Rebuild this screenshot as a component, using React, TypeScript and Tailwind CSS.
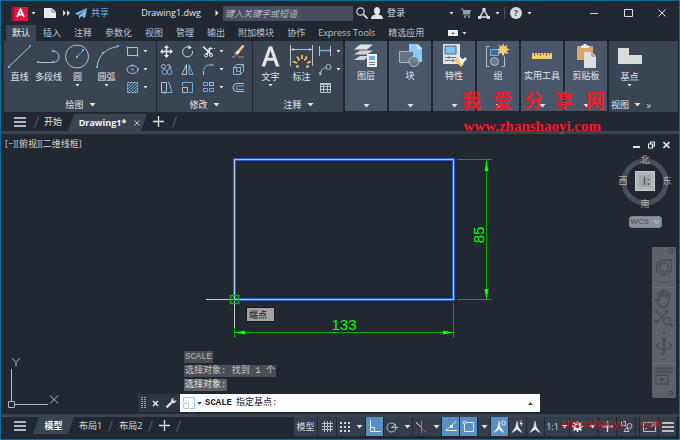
import React from "react";

type Kids = { children: React.ReactNode };

const LINE = "#b9c0c9";
const BLUE = "#63b3ea";

function Icon({ w, h, children }: Kids & { w: number; h: number }) {
  return (
    <svg width={w} height={h} viewBox={`0 0 ${w} ${h}`} fill="none" stroke={LINE} className="shrink-0" aria-hidden="true">
      {children}
    </svg>
  );
}

function Caret({ small = false }: { small?: boolean }) {
  return small ? (
    <Icon w={5} h={3}>
      <path d="M0.5 0h4L2.5 2.5z" fill="#e6e9ed" stroke="none" />
    </Icon>
  ) : (
    <Icon w={7} h={4}>
      <path d="M0.5 0h6L3.5 3.5z" fill="#dfe3e8" stroke="none" />
    </Icon>
  );
}

function Dots({ at, r = 1 }: { at: [number, number][]; r?: number }) {
  return (
    <>
      {at.map(([x, y]) => (
        <rect key={`${x}-${y}`} x={x - r} y={y - r} width={2 * r} height={2 * r} fill={BLUE} stroke="none" />
      ))}
    </>
  );
}

function Burger() {
  return (
    <Icon w={12} h={10}>
      <path d="M0 1h12M0 5h12M0 9h12" stroke="#e4e6ea" strokeWidth="1.4" />
    </Icon>
  );
}

function Slash() {
  return (
    <Icon w={5} h={12}>
      <path d="M0.5 11.5L4.5 0.5" stroke="#5a6475" />
    </Icon>
  );
}

function Plus() {
  return (
    <Icon w={11} h={11}>
      <path d="M5.5 0v11M0 5.5h11" stroke="#dfe2e6" strokeWidth="1.3" />
    </Icon>
  );
}

/* ---------- Title bar ---------- */

function IconButton({ label, className = "", children }: Kids & { label: string; className?: string }) {
  return (
    <button type="button" aria-label={label} className={`flex h-full shrink-0 items-center justify-center ${className}`}>
      {children}
    </button>
  );
}

function TitleBar() {
  return (
    <header className="flex h-6 items-center">
      <div className="flex h-full w-[222px] shrink-0 items-center">
        <IconButton label="应用程序菜单" className="w-9 gap-[3px] pl-[9px]">
          <Icon w={17} h={15}>
            <path d="M0 1h17v14H0z" fill="#e5123f" stroke="none" />
            <path d="M0 1h3v14H0z" fill="#a00d30" stroke="none" />
            <path d="M6 11L9.500 3.500L13 11M7.300 8.600h4.400" stroke="#fff" strokeWidth="1.800" />
          </Icon>
          <Caret small />
        </IconButton>
        <IconButton label="新建" className="w-[25px]">
          <Icon w={12} h={10}>
            <path d="M0 0h8l4 4v6H0z" fill="#e8e8e8" stroke="none" />
            <path d="M8 0v4h4" stroke="#7b828c" />
          </Icon>
        </IconButton>
        <IconButton label="更多" className="w-[9px]">
          <Icon w={7} h={6}>
            <path d="M0 0l3 3-3 3zM4 0l3 3-3 3z" fill="#d5d8dc" stroke="none" />
          </Icon>
        </IconButton>
        <button type="button" className="flex h-full w-[56px] items-center gap-1 pl-1 text-[#6cb6ea]">
          <Icon w={12} h={11}>
            <path d="M12 0L0 5.500l3 1.500zM12 0L4 7.500V11l2-2.500zM12 0L6.500 8l3.500 2z" fill="#7cc4f4" stroke="none" />
          </Icon>
          共享
        </button>
        <span className="w-[88px] text-center text-[#e1e4e8]">Drawing1.dwg</span>
        <Icon w={4} h={6}>
          <path d="M0.5 0l3 3-3 3z" fill="#e4e6ea" stroke="none" />
        </Icon>
      </div>
      <input
        aria-label="键入关键字或短语"
        placeholder="键入关键字或短语"
        className="h-[15px] w-[130px] shrink-0 bg-[#474e60] px-0.5 italic placeholder-[#b4bac5] outline-none"
      />
      <IconButton label="搜索" className="w-[18px]">
        <Icon w={12} h={12}>
          <circle cx="4.500" cy="4.500" r="3.700" stroke="#d6d9dd" strokeWidth="1.200" />
          <path d="M7.300 7.300L11.500 11.500" stroke="#d6d9dd" strokeWidth="1.800" />
        </Icon>
      </IconButton>
      <button type="button" className="flex h-full w-[36px] shrink-0 items-center gap-1 text-[#d8dce1]">
        <Icon w={12} h={12}>
          <path d="M0 12c0-3 2-4 4.500-4.500C2 5.500 2.500 0 6 0s4 5.500 1.500 7.500C10 8 12 9 12 12z" fill="#e2e4e6" stroke="none" />
        </Icon>
        <span className="whitespace-nowrap">登录</span>
      </button>
      <div className="flex h-full items-center pl-[40px]">
        <IconButton label="账户" className="w-[9px]">
          <Caret small />
        </IconButton>
        <IconButton label="应用商店" className="w-5">
          <Icon w={10} h={10}>
            <path d="M0 1h2l1 6h6" stroke="#9aa0a9" />
            <path d="M2 2h8l-1 4H3z" fill="#9aa0a9" stroke="none" />
            <circle cx="4" cy="9" r="1" fill="#9aa0a9" stroke="none" />
            <circle cx="8" cy="9" r="1" fill="#9aa0a9" stroke="none" />
          </Icon>
        </IconButton>
        <IconButton label="保持连接" className="w-[26px] gap-[5px]">
          <Icon w={12} h={11}>
            <path d="M6 2L2 9M6 2l4 7M2 9h8" stroke="#dcdfe3" strokeWidth="1.500" />
            <path d="M4.500 0h3v3h-3zM0 8h3v3H0zM9 8h3v3H9z" fill="#dcdfe3" stroke="none" />
          </Icon>
          <Caret small />
        </IconButton>
        <span className="mr-0.5 ml-0.5 h-3 w-px bg-[#485062]" />
        <IconButton label="帮助" className="w-[28px] gap-[5px]">
          <span className="flex size-3 items-center justify-center rounded-full bg-[#d8d8d8] text-[9px] font-bold text-[#4a515c]">?</span>
          <Caret small />
        </IconButton>
      </div>
      <div className="ml-auto flex h-full">
        <IconButton label="最小化" className="w-[34px]">
          <Icon w={8} h={8}><path d="M0 4.500h8" stroke="#c9ccd0" /></Icon>
        </IconButton>
        <IconButton label="最大化" className="w-[34px]">
          <Icon w={9} h={8}><path d="M0.500 0.500h8v7h-8z" stroke="#dde0e4" /></Icon>
        </IconButton>
        <IconButton label="关闭" className="w-[34px]">
          <Icon w={8} h={8}><path d="M0.500 0.500l7 7M7.500 0.500l-7 7" stroke="#e6e8eb" /></Icon>
        </IconButton>
      </div>
    </header>
  );
}

/* ---------- Ribbon ---------- */

const TABS = ["默认", "插入", "注释", "参数化", "视图", "管理", "输出", "附加模块", "协作", "Express Tools", "精选应用"];

function RibbonTabs() {
  return (
    <nav className="flex h-4 items-stretch gap-px pl-[5px]">
      {TABS.map((t, i) => (
        <button
          key={t}
          type="button"
          className={`px-1.5 whitespace-nowrap ${i === 0 ? "bg-[#3b4453] text-[#f0f2f4]" : "text-[#bcc2ca]"}`}
        >
          {t}
        </button>
      ))}
      <IconButton label="功能区显示" className="w-[52px] gap-1">
        <Icon w={10} h={6}>
          <path d="M0 0h10v6H0z" fill="#eceef0" stroke="none" />
          <path d="M3.500 4L5 2l1.500 2z" fill="#333b48" stroke="none" />
        </Icon>
        <Caret small />
      </IconButton>
    </nav>
  );
}

function Panel({ title, className = "", children, extra }: Kids & { title: string; className?: string; extra?: React.ReactNode }) {
  return (
    <section className={`flex h-[71px] shrink-0 flex-col bg-[#3b4453] ${className}`}>
      <div className="flex h-[58px] pt-px">{children}</div>
      <button type="button" className="flex h-[12px] items-center justify-center gap-[5px]">
        {title}
        <Caret />
        {extra}
      </button>
    </section>
  );
}

function BigButton({ label, caret = false, wide = false, children }: Kids & { label: string; caret?: boolean; wide?: boolean }) {
  return (
    <button type="button" className={`flex shrink-0 flex-col items-center pt-[2px] ${wide ? "w-[33px]" : "w-[29px]"}`}>
      <Icon w={25} h={25}>{children}</Icon>
      <span className="mt-[2px] h-[12px] leading-[12px] whitespace-nowrap">{label}</span>
      {caret && <span className="mt-px"><Caret small /></span>}
    </button>
  );
}

function SmallTool({ label, caret = false, children }: Kids & { label: string; caret?: boolean }) {
  return (
    <button type="button" aria-label={label} className="flex h-[18px] items-center gap-1">
      <Icon w={13} h={13}>{children}</Icon>
      {caret && <Caret small />}
    </button>
  );
}

function DrawPanel() {
  return (
    <Panel title="绘图" className="w-[152px] pl-px">
      <BigButton label="直线">
        <path d="M1.500 23L23.500 2" />
        <Dots at={[[2, 23], [23, 2]]} />
      </BigButton>
      <BigButton label="多段线">
        <path d="M1 18.500h16c8 0 8-11.500 0-11.500" />
        <Dots at={[[2, 18], [17, 18], [17, 7]]} />
      </BigButton>
      <BigButton label="圆" caret>
        <circle cx="12" cy="12.500" r="11.500" />
        <path d="M12 12.500l6.500-6" stroke={BLUE} />
        <Dots at={[[12, 13], [18, 6]]} />
      </BigButton>
      <BigButton label="圆弧" caret>
        <path d="M3 23C4 12 12 4 24 2.500" />
        <Dots at={[[3, 23], [9, 9], [24, 2]]} />
      </BigButton>
      <div className="flex flex-col pl-[5px]">
        <SmallTool label="矩形" caret>
          <path d="M1.500 2.500h10v8h-10z" />
          <Dots at={[[1.5, 2.5], [11.5, 10.5]]} />
        </SmallTool>
        <SmallTool label="椭圆" caret>
          <ellipse cx="6.500" cy="6.500" rx="5.500" ry="4" />
          <Dots at={[[6.5, 6.5], [6.5, 2.5], [12, 6.5]]} />
        </SmallTool>
        <SmallTool label="图案填充" caret>
          <path d="M1.500 1.500h10v10h-10z" strokeDasharray="2 1" />
          <path d="M2 5l3-3M2 8l6-6M2 11l9-9M5 11l6-6M8 11l3-3" stroke={BLUE} />
        </SmallTool>
      </div>
    </Panel>
  );
}

function ModifyPanel() {
  return (
    <Panel title="修改" className="w-[95px]">
      <div className="grid h-[54px] grid-cols-[21px_21px_30px_14px] content-start pl-[3px]">
        <SmallTool label="移动">
          <path d="M6.500 1v11M1 6.500h11" stroke="#f0f1f3" strokeWidth="1.400" />
          <path d="M6.500 0L4 3h5zM6.500 13L4 10h5zM0 6.500L3 4v5zM13 6.500L10 4v5z" fill="#f0f1f3" stroke="none" />
        </SmallTool>
        <SmallTool label="旋转">
          <path d="M8.500 2.300A5 5 0 1 0 11.500 6" stroke="#d0d4d9" />
          <path d="M7 0l4 2.500-3.500 2z" fill="#d0d4d9" stroke="none" />
        </SmallTool>
        <SmallTool label="修剪" caret>
          <path d="M1 1.500l8 7.500M9 2.500L4.500 9.500" stroke="#e8eaed" strokeWidth="1.700" />
          <circle cx="4" cy="10.500" r="1.500" stroke="#e8eaed" />
          <circle cx="9" cy="10" r="1.500" stroke="#e8eaed" />
          <path d="M6 3.500h7" strokeDasharray="2 1" />
        </SmallTool>
        <SmallTool label="删除">
          <path d="M11.500 0.500L6 7" stroke="#efcf83" strokeWidth="2.500" />
          <path d="M6.500 6.500L4 9" stroke="#fff" strokeWidth="3" />
          <path d="M4.500 8.500L3 10" stroke="#e05246" strokeWidth="3" />
          <path d="M0 12h3" stroke={BLUE} />
          <path d="M6 12h6" stroke="#d08b68" />
        </SmallTool>
        <SmallTool label="复制">
          <circle cx="3.500" cy="3.500" r="2" />
          <path d="M7 2h3v3M8.500 4L10 5.500 11.500 4" />
          <circle cx="4.500" cy="9" r="2.500" stroke={BLUE} />
          <circle cx="9.500" cy="9" r="2.500" stroke={BLUE} />
        </SmallTool>
        <SmallTool label="镜像">
          <path d="M5.500 1.500v10H1z" />
          <path d="M8 1.500v10h4z" stroke={BLUE} />
        </SmallTool>
        <SmallTool label="圆角" caret>
          <path d="M1.500 12V9" />
          <path d="M1.500 9c0-4 2-7 6-7" stroke={BLUE} />
          <path d="M7.500 2H12" />
        </SmallTool>
        <SmallTool label="分解">
          <path d="M1.500 4.500h7v7h-7zM1.500 4.500l3-3h7l-3 3M11.500 1.500v7l-3 3" stroke="#8fb3d1" />
          <path d="M4.500 4.500v4h4" stroke={BLUE} />
        </SmallTool>
        <SmallTool label="拉伸">
          <path d="M5 11.500H1.500v-10h5v9" />
          <path d="M8 1.500h1l3 10H5M4 9.500l2 2-2 2" stroke={BLUE} />
        </SmallTool>
        <SmallTool label="缩放">
          <path d="M1.500 6.500h5v5h-5z" />
          <path d="M1.500 5V1.500h10v10H8" stroke={BLUE} />
        </SmallTool>
        <SmallTool label="阵列" caret>
          <path d="M1.500 1.500h4v3h-4zM1.500 7.500h4v3h-4zM7.500 7.500h4v3h-4z" stroke={BLUE} />
          <path d="M7.500 1.500h4v3h-4z" />
        </SmallTool>
        <SmallTool label="偏移">
          <path d="M12 2.500H5a4 4 0 0 0 0 8h7" />
          <path d="M12 5H6a1.700 1.700 0 0 0 0 3.500h6" stroke={BLUE} />
        </SmallTool>
      </div>
    </Panel>
  );
}

function AnnotatePanel() {
  return (
    <Panel title="注释" className="w-[90px] pl-px">
      <BigButton label="文字" caret wide>
        <path d="M3.500 22.500L10.800 2.500h3.400l7.300 20h-3.600l-2-5.800H9.100l-2 5.800zM10.100 13.800h4.800L12.500 6.500z" fill="#e4e4e4" stroke="none" />
      </BigButton>
      <BigButton label="标注">
        <path d="M1.500 1v21M23.500 1v21M2 5.500h21" />
        <path d="M2 5.500l3-1.500v3zM23 5.500l-3-1.500v3z" fill={LINE} stroke="none" />
        <path d="M4 17.500l4 1.500M8 12.500l2.500 4M13 11v4M18 12.500l-2.500 4M22 17.500l-4 1.500M7 22.500h3M17 22.500h3" stroke="#f2c45a" strokeWidth="1.800" />
      </BigButton>
      <div className="flex flex-col pl-[3px]">
        <SmallTool label="线性" caret>
          <path d="M0.500 1v10M11.500 1v10" />
          <path d="M1 5.500h10" stroke={BLUE} strokeWidth="1.500" />
        </SmallTool>
        <SmallTool label="引线" caret>
          <path d="M1 11.500C2 6 5 5 7 4.500" />
          <circle cx="9.500" cy="4" r="2.500" />
          <path d="M0 9l3 1-2 3z" fill={LINE} stroke="none" />
        </SmallTool>
        <SmallTool label="表格">
          <path d="M1.500 2.500h10v9h-10zM1.500 5.500h10M1.500 8.500h10M4.500 3v8M8.500 3v8" />
          <path d="M1 2h11v2H1z" fill={LINE} stroke="none" />
        </SmallTool>
      </div>
    </Panel>
  );
}

function CollapsedPanel({ label, children }: Kids & { label: string }) {
  return (
    <button type="button" className="flex h-[70px] w-[42px] shrink-0 flex-col items-center bg-[#4a566a] pt-[2px]">
      <Icon w={26} h={25}>{children}</Icon>
      <span className="mt-[2px] leading-[12px] whitespace-nowrap">{label}</span>
      <span className="mt-auto mb-[3px]"><Caret /></span>
    </button>
  );
}

function CollapsedPanels() {
  return (
    <div className="flex gap-[2px] px-px">
      <CollapsedPanel label="图层">
        <path d="M7 1.500h13l-6 5H1z" fill="#e2e2e2" stroke="none" />
        <path d="M7 7.500h13l-6 4H1zM7 13h9l-5 4H1z" fill="#d2d5d8" stroke="none" />
        <path d="M14 11h10v13H14z" fill="#eef0f2" stroke="none" />
        <path d="M16 13h6v4h-6z" fill={BLUE} stroke="none" />
        <path d="M16 19.500h6M16 21.500h6" stroke="#6d7784" />
      </CollapsedPanel>
      <CollapsedPanel label="块">
        <path d="M12 1h9l4 4v14H12z" fill="#8ccaf7" stroke="none" />
        <path d="M20 1v5h5" fill="#c7e5fb" stroke="none" />
        <path d="M2.500 8.500h14v11h-14z" fill="#667285" stroke="#aab2bc" />
        <circle cx="17" cy="18.500" r="5" fill="#69788c" fillOpacity="0.800" />
      </CollapsedPanel>
      <CollapsedPanel label="特性">
        <path d="M2 1h17v20H2z" fill="#e0e2e4" stroke="none" />
        <path d="M4 3h11v8H4z" fill="#79c3f5" stroke="#4e6680" />
        <path d="M4 14.500h11M4 17.500h11M8 13v3M12 16v3" stroke="#6d7784" />
        <path d="M13 17l3-3 7 7-3 3z" fill="#f3c76b" stroke="none" />
        <path d="M18 15l5 4M20 20l5-5" stroke="#fff" strokeWidth="2.500" />
      </CollapsedPanel>
      <CollapsedPanel label="组">
        <path d="M4.500 3.500h-3v20h3M16.500 23.500h3v-10" />
        <path d="M5.500 6.500h8v6h-8z" fill="#3e6f9b" stroke={BLUE} />
        <circle cx="9.500" cy="18.500" r="4" fill="#69788c" />
        <path d="M18 0l1.300 3.500 3.200-1.800-1 3.500 3.500 1-3.300 1.600 1.800 3.200-3.700-.9L18 13.500l-1.500-3.400-3.500 1 1.700-3.300L11.500 6.300l3.400-1-1.300-3.500 3.300 1.700z" fill="#f7cf6e" stroke="none" />
      </CollapsedPanel>
      <CollapsedPanel label="实用工具">
        <path d="M3 10h20v6H3z" fill="#f4cd6d" stroke="none" />
        <path d="M5.500 10v3M8.500 10v2M11.500 10v3M14.500 10v2M17.500 10v3M20.500 10v2" stroke="#836a35" />
      </CollapsedPanel>
      <CollapsedPanel label="剪贴板">
        <path d="M4 3h16v14H4z" fill="#d9a766" stroke="none" />
        <path d="M8 5V2.500h2L11 1h2l1 1.500h2V5z" fill="#eceef0" stroke="none" />
        <path d="M11 9h8l4 4v12H11z" fill="#dcdee0" stroke="none" />
        <path d="M19 9v4h4" stroke="#7b8490" />
      </CollapsedPanel>
    </div>
  );
}

function Ribbon() {
  return (
    <div className="flex gap-px pr-px pl-[3px] text-[#e2e5e9]">
      <DrawPanel />
      <ModifyPanel />
      <AnnotatePanel />
      <CollapsedPanels />
      <Panel
        title="视图"
        className="flex-1 items-start pl-0.5"
        extra={
          <Icon w={5} h={5}>
            <path d="M4 1v3H1M1 1l3 3" />
          </Icon>
        }
      >
        <div className="pl-0.5">
          <BigButton label="基点" caret wide>
            <path d="M1 4h11v7h13v9H1z" fill="#d9dadc" stroke="none" />
          </BigButton>
        </div>
      </Panel>
    </div>
  );
}

/* ---------- Document tabs ---------- */

function SlantTab({ className, children }: Kids & { className: string }) {
  return (
    <div className={`flex h-full items-center justify-center gap-2 bg-[#3b4453] text-[#f4f5f7] [clip-path:polygon(6px_0,100%_0,calc(100%-6px)_100%,0_100%)] ${className}`}>
      {children}
    </div>
  );
}

function DocumentTabs() {
  return (
    <div className="border-b-[3px] border-[#3b4453] pl-[13px]">
      <div className="flex h-[19px] items-center text-[#dfe3e7]">
        <button type="button" aria-label="菜单"><Burger /></button>
        <div className="flex w-[42px] items-center gap-[5px] pl-[8px]">
          <Slash />
          <button type="button" className="whitespace-nowrap">开始</button>
        </div>
        <div className="h-[17px] w-[79px] self-end">
          <SlantTab className="w-full pl-1">
            <button type="button" className="font-bold">Drawing1*</button>
            <button type="button" aria-label="关闭图形">
              <Icon w={6} h={6}><path d="M0.500 0.500l5 5M5.500 0.500l-5 5" /></Icon>
            </button>
          </SlantTab>
        </div>
        <div className="flex items-center gap-2 pl-1.5">
          <button type="button" aria-label="新图形"><Plus /></button>
          <Slash />
        </div>
      </div>
    </div>
  );
}

/* ---------- Drawing area ---------- */

function Drawing() {
  return (
    <svg className="absolute inset-0 size-full" role="img" aria-label="图形">
      <g transform="translate(-1 -134)" fill="none">
        <g stroke="#00a800">
          <path d="M457 159.500h35M457 299.500h35M486.500 160v140M234.500 303v35M453.500 303v35M234 332.500h220" />
        </g>
        <path d="M486.500 160l-2 11h4zM486.500 300l-2-11h4zM234 332.500l11-2v4zM454 332.500l-11-2v4z" fill="#00ff00" />
        <path d="M206 299.500h56M234.500 272v56" stroke="#c9cbce" />
        <path d="M234.500 159.500h219v140h-219z" stroke="#2f5dbd" strokeWidth="3" />
        <path d="M234.500 159.500h219v140h-219z" stroke="#a9c4f8" />
        <path d="M230.500 295.500h8v8h-8z" stroke="#00b400" strokeWidth="1.500" />
        <text x="344" y="330" textAnchor="middle" fill="#00ff00" fontSize="15" fontFamily="Liberation Sans, sans-serif">133</text>
        <text transform="translate(484 235) rotate(-90)" textAnchor="middle" fill="#00ff00" fontSize="15" fontFamily="Liberation Sans, sans-serif">85</text>
        <g stroke="#b3b7bc">
          <path d="M11.500 369v32M15 404.500h33" />
          <path d="M8.500 401.500h6v6h-6zM12 358l4 4.500 4-4.500M16 362.500v4M50 395.500l8 8M58 395.500l-8 8" />
        </g>
      </g>
    </svg>
  );
}

function ViewCube() {
  return (
    <div className="absolute top-[20px] right-[7px] flex w-[54px] flex-col items-center gap-2 text-[#b0b5bb]">
      <div className="relative grid size-[54px] grid-cols-[10px_1fr_10px] grid-rows-[10px_1fr_10px] place-items-center">
        <svg className="absolute inset-0 size-full" viewBox="0 0 54 54" fill="none">
          <circle cx="27" cy="28" r="21" stroke="#49505a" strokeWidth="5" />
        </svg>
        <span className="relative col-start-2 leading-[9px]">北</span>
        <span className="relative col-start-1 row-start-2">西</span>
        <button type="button" aria-label="上" className="relative col-start-2 row-start-2 flex size-5 items-center justify-center border border-[#c6c8ca] bg-[#b4b7ba]">
          <Icon w={12} h={12}>
            <path d="M0 0h12v12H0z" fill="#a2a6aa" stroke="none" />
            <path d="M5.500 2v8M9.500 4v1.500M9.500 8v2" stroke="#555b63" strokeWidth="1.500" />
          </Icon>
        </button>
        <span className="relative col-start-3 row-start-2">东</span>
        <span className="relative col-start-2 row-start-3 leading-[9px]">南</span>
      </div>
      <button type="button" className="flex h-[12px] w-[33px] items-center justify-center gap-1 rounded-[3px] border border-[#7f848c] bg-[#8d9199] text-[8px] text-[#5b616a]">
        <span className="font-['Liberation_Sans',sans-serif] font-bold">WCS</span>
        <Icon w={7} h={5}><path d="M1 1h5L3.500 4z" stroke="#b9bcc2" /></Icon>
      </button>
    </div>
  );
}

function NavBar() {
  const dim = "#454c55";
  return (
    <div className="absolute top-[113px] right-[3px] h-[151px] w-6 rounded-[2px] bg-[#5c6268]" role="toolbar" aria-label="导航栏">
      <svg width="24" height="151" viewBox="0 0 24 151" fill="none" stroke={dim} strokeWidth="1.300">
        <circle cx="19" cy="4" r="2" />
        <path d="M12 13h7.500v7.500A7.500 7.500 0 1 1 12 13z" />
        <circle cx="12" cy="20.500" r="4.500" />
        <path d="M0 40.500h24M0 116.500h24" stroke="#6a7076" strokeWidth="1" />
        <path d="M10 35h4l-2 2zM10 85h4l-2 2zM10 112h4l-2 2z" fill={dim} stroke="none" />
        <path d="M8 59c-2-2-3-5-4.500-6.500 1-1.500 3 .5 4 1.500L6 46c1-1.500 2 0 2.500 1l1 4V44c1-1 2-1 2 0l.5 6 1-6c1-1 2 0 2 1l-.5 6 2-4c1-.5 1.500 0 1.500 1L16 56l-2 4H9z" />
        <path d="M5 65l10 10M15 65L5 75" />
        <path d="M3 63h3v3H3zM13 63h3v3h-3zM3 73h3v3H3z" fill={dim} stroke="none" />
        <circle cx="15" cy="74" r="3.500" fill="#5c6268" />
        <path d="M17.500 76.500l3 3" strokeWidth="2" />
        <path d="M12 107V92l-2 2M12 92l2 2" strokeWidth="2" />
        <path d="M16 96c6 2 4 6-4 6s-10-4-4-6M9 106l3 2" />
        <path d="M4 121h4v4H4zM10 121h4v4h-4zM16 121h4v4h-4zM4 128h12v9H4z" />
        <path d="M8 130l5 2.500-5 3z" fill={dim} stroke="none" />
        <circle cx="19" cy="146" r="2" />
      </svg>
    </div>
  );
}

function CommandLine() {
  return (
    <div className="absolute bottom-[2px] left-[137px] w-[402px] font-['Liberation_Mono','Noto_Sans_CJK_SC',monospace]">
      <div className="flex flex-col items-start gap-[2px] pb-[3px] pl-[46px] leading-[12px] whitespace-pre text-[#dfe0e2]">
        <span className="bg-[#4b4f54] px-px text-[#b4b7ba]">SCALE</span>
        <span className="bg-[#4b4f54] px-px text-[#c4c6c8]">选择对象: 找到 1 个</span>
        <span className="bg-[#5b5f62] px-px">选择对象:</span>
      </div>
      <div className="flex h-[18px] bg-white">
        <div className="flex w-[42px] shrink-0 items-center gap-[6px] bg-[#2e3542] pl-[3px]">
          <Icon w={5} h={12}>
            <path d="M1 0v12M4 0v12" stroke="#c9ccd0" strokeDasharray="1 1" strokeWidth="1.500" />
          </Icon>
          <button type="button" aria-label="关闭命令行">
            <Icon w={7} h={7}><path d="M1 1l5 5M6 1L1 6" stroke="#e2e4e6" strokeWidth="1.600" /></Icon>
          </button>
          <button type="button" aria-label="自定义">
            <Icon w={12} h={12}>
              <path d="M1.500 10.500l6-6" stroke="#dddfe2" strokeWidth="2.400" />
              <path d="M9 1C6 1 5.500 4 7 5.500S11 6 11.500 3L9.500 4 8 3z" fill="#dddfe2" stroke="none" />
            </Icon>
          </button>
        </div>
        <button type="button" aria-label="最近使用的命令" className="flex items-center gap-[2px] pl-[3px]">
          <Icon w={12} h={12}>
            <path d="M0.500 6.500h5v5h-5z" stroke="#bfc3c8" />
            <path d="M0.500 5V0.500h11v11H7" stroke="#8fc8f0" />
          </Icon>
          <Icon w={5} h={3}><path d="M0 0h5L2.500 3z" fill="#444b55" stroke="none" /></Icon>
        </button>
        <label htmlFor="cmd" className="flex shrink-0 items-center gap-1 pl-[3px] text-[#15181c]">
          <strong>SCALE</strong>指定基点:
        </label>
        <input id="cmd" className="min-w-0 flex-1 bg-transparent text-black outline-none" />
        <button type="button" aria-label="命令历史" className="w-3">
          <Icon w={5} h={3}><path d="M0 3h5L2.500 0z" fill="#444b55" stroke="none" /></Icon>
        </button>
      </div>
    </div>
  );
}

function Canvas() {
  return (
    <main className="relative min-h-[280px] flex-1 overflow-hidden">
      <Drawing />
      <div className="relative flex items-start justify-between pt-1 pr-[9px] pl-1 text-[#cfd2d6]">
        <span className="leading-[12px]">[−][俯视][二维线框]</span>
        <div className="flex gap-2 pt-[3px]">
          <button type="button" aria-label="最小化视口"><Icon w={7} h={8}><path d="M0 6h7" stroke="#e6e8ea" strokeWidth="2" /></Icon></button>
          <button type="button" aria-label="还原视口"><Icon w={7} h={8}><path d="M0.500 3h4v4h-4zM2.500 2.500V1h4v4H5" stroke="#e6e8ea" strokeWidth="1.200" /></Icon></button>
          <button type="button" aria-label="关闭视口"><Icon w={7} h={8}><path d="M0.500 1l6 6M6.500 1l-6 6" stroke="#e6e8ea" strokeWidth="1.600" /></Icon></button>
        </div>
      </div>
      <div className="absolute top-[173px] left-[245px] h-[15px] w-[29px] border border-[#15181d] bg-[#a3a3a3] pl-[2px] leading-[13px] text-[#101010]">端点</div>
      <ViewCube />
      <NavBar />
      <CommandLine />
    </main>
  );
}

/* ---------- Status bar ---------- */

function Toggle({ label, width, on = false, children }: Kids & { label: string; width: string; on?: boolean }) {
  return (
    <button
      type="button"
      aria-label={label}
      aria-pressed={on}
      className={`flex h-[19px] shrink-0 items-center justify-center gap-1.5 ${width} ${on ? "bg-[#5a8fc6]" : "bg-[#353d4b]"}`}
    >
      {children}
    </button>
  );
}

function Pen({ mark }: { mark?: "circle" | "spark" }) {
  return (
    <Icon w={13} h={13}>
      <path d="M6 1l1.200 6L11 12.500l-3.500-2L6 9l-1.500 1.500L1 12.500 4.800 7z" fill="#eceef0" stroke="#eceef0" strokeWidth="0.500" />
      {mark === "circle" && <circle cx="10.500" cy="3" r="2" stroke="#e4e9ef" />}
      {mark === "spark" && <path d="M10.500 0.500l-1.500 3h2.500L9.500 6" stroke="#e4e9ef" />}
    </Icon>
  );
}

function StatusBar() {
  return (
    <footer className="flex h-[25px] items-start border-t-[3px] border-[#3b4453] pl-[13px] text-[#d8dce1]">
      <div className="flex h-[17px] items-center">
        <button type="button" aria-label="布局菜单"><Burger /></button>
        <div className="h-full w-[48px] pl-[7px]">
          <SlantTab className="w-[41px]"><button type="button" className="font-bold whitespace-nowrap">模型</button></SlantTab>
        </div>
        <div className="flex items-center gap-[6px] pl-[5px] whitespace-nowrap">
          <button type="button">布局1</button>
          <Slash />
          <button type="button">布局2</button>
          <Slash />
          <button type="button" aria-label="新建布局"><Plus /></button>
          <Slash />
        </div>
      </div>
      <div className="ml-auto flex gap-px pr-[3px]">
        <Toggle label="模型空间" width="w-[23px]">模型</Toggle>
        <Toggle label="栅格" width="w-[18px]">
          <Icon w={11} h={11}><path d="M2.500 0v11M5.500 0v11M8.500 0v11M0 2.500h11M0 5.500h11M0 8.500h11" /></Icon>
        </Toggle>
        <Toggle label="捕捉" width="w-[28px]">
          <Icon w={10} h={10}><path d="M0 1h10M0 5h10M0 9h10" stroke="#d5d8dc" strokeWidth="2" strokeDasharray="2 2" /></Icon>
          <Caret />
        </Toggle>
        <Toggle label="正交" width="w-[17px]" on>
          <Icon w={13} h={13}><path d="M2.500 0v11.500H13M2.500 7.500h4v4" stroke="#e4eaf1" /></Icon>
        </Toggle>
        <Toggle label="极轴" width="w-[28px]">
          <Icon w={12} h={12}><circle cx="5.500" cy="6.500" r="4.500" /><path d="M5.500 6.500L10 3M5.500 6.500H12" /></Icon>
          <Caret />
        </Toggle>
        <Toggle label="等轴测" width="w-[28px]">
          <Icon w={12} h={12}><path d="M1 2l10 9" stroke="#b7635f" /><path d="M6.500 0v12" stroke="#4fa96f" /><path d="M1 1l5 5" /></Icon>
          <Caret />
        </Toggle>
        <Toggle label="对象捕捉追踪" width="w-[17px]" on>
          <Icon w={13} h={13}><path d="M12 1.500L1.500 10.500H13" stroke="#e4eaf1" /><path d="M6 5h3v3H6z" fill="#e4eaf1" stroke="none" /></Icon>
        </Toggle>
        <Toggle label="对象捕捉" width="w-[17px]" on>
          <Icon w={13} h={13}><path d="M2.500 2.500h9v9h-9z" stroke="#e4eaf1" /><circle cx="2.500" cy="2.500" r="1.500" fill="#5a8fc6" stroke="#e4eaf1" /></Icon>
        </Toggle>
        <Toggle label="捕捉设置" width="w-[12px]"><Caret /></Toggle>
        <Toggle label="注释可见性" width="w-[17px]" on><Pen mark="circle" /></Toggle>
        <Toggle label="自动缩放" width="w-[17px]"><Pen mark="spark" /></Toggle>
        <Toggle label="注释比例" width="w-[17px]"><Pen /></Toggle>
        <Toggle label="比例" width="w-[24px]"><span className="-mr-1">1:1</span><Caret /></Toggle>
        <Toggle label="工作空间" width="w-[28px]">
          <Icon w={11} h={11}>
            <circle cx="5.500" cy="5.500" r="3" stroke="#dfe1e4" strokeWidth="2" />
            <path d="M5.500 0v11M0 5.500h11M1.500 1.500l2 2M7.500 7.500l2 2M9.500 1.500l-2 2M3.500 7.500l-2 2" stroke="#dfe1e4" strokeWidth="1.600" />
            <circle cx="5.500" cy="5.500" r="1.500" fill="#353d4b" stroke="none" />
          </Icon>
          <Caret />
        </Toggle>
        <Toggle label="注释监视器" width="w-[17px]"><Plus /></Toggle>
        <Toggle label="隔离对象" width="w-[18px]">
          <Icon w={13} h={13}><path d="M1.500 1.500h4v4h-4zM4 11.500h5L6.500 7.500z" /><circle cx="9.500" cy="6" r="2.500" /></Icon>
        </Toggle>
        <span className="h-[19px] w-[3px] bg-[#353d4b]" />
        <Toggle label="全屏显示" width="w-[18px]">
          <Icon w={13} h={10}><path d="M0.500 0.500h12v9H0.500zM8 5l3-3M9 2h2v2M2 8l2-2" /></Icon>
        </Toggle>
        <Toggle label="自定义" width="w-[17px]"><Burger /></Toggle>
      </div>
    </footer>
  );
}

/* ---------- Watermarks ---------- */

function Watermarks() {
  return (
    <div className="pointer-events-none text-[#ee1c24]">
      <div className="absolute top-[87px] right-[74px] flex gap-3 font-['Noto_Sans_CJK_SC',sans-serif] text-[19px] leading-[24px] font-bold">
        {["我", "爱", "分", "享", "网"].map((c) => (
          <span key={c}>{c}</span>
        ))}
      </div>
      <div className="absolute top-[117px] right-[78px] font-['Liberation_Serif',serif] text-[15px] leading-[16px] font-bold">www.zhanshaoyi.com</div>
      <div className="absolute right-[20px] bottom-[8px] font-['Liberation_Mono',monospace] text-[11px] leading-[14px] text-[#d01820]">zhanshaoyi. com</div>
    </div>
  );
}

export default function App() {
  return (
    <div className="relative flex min-h-screen w-full flex-col border border-[#0d6c98] bg-[#222831] font-['Open_Sans','Noto_Sans_CJK_SC',sans-serif] text-[9px] leading-[12px]">
      <TitleBar />
      <RibbonTabs />
      <Ribbon />
      <DocumentTabs />
      <Canvas />
      <StatusBar />
      <Watermarks />
    </div>
  );
}
